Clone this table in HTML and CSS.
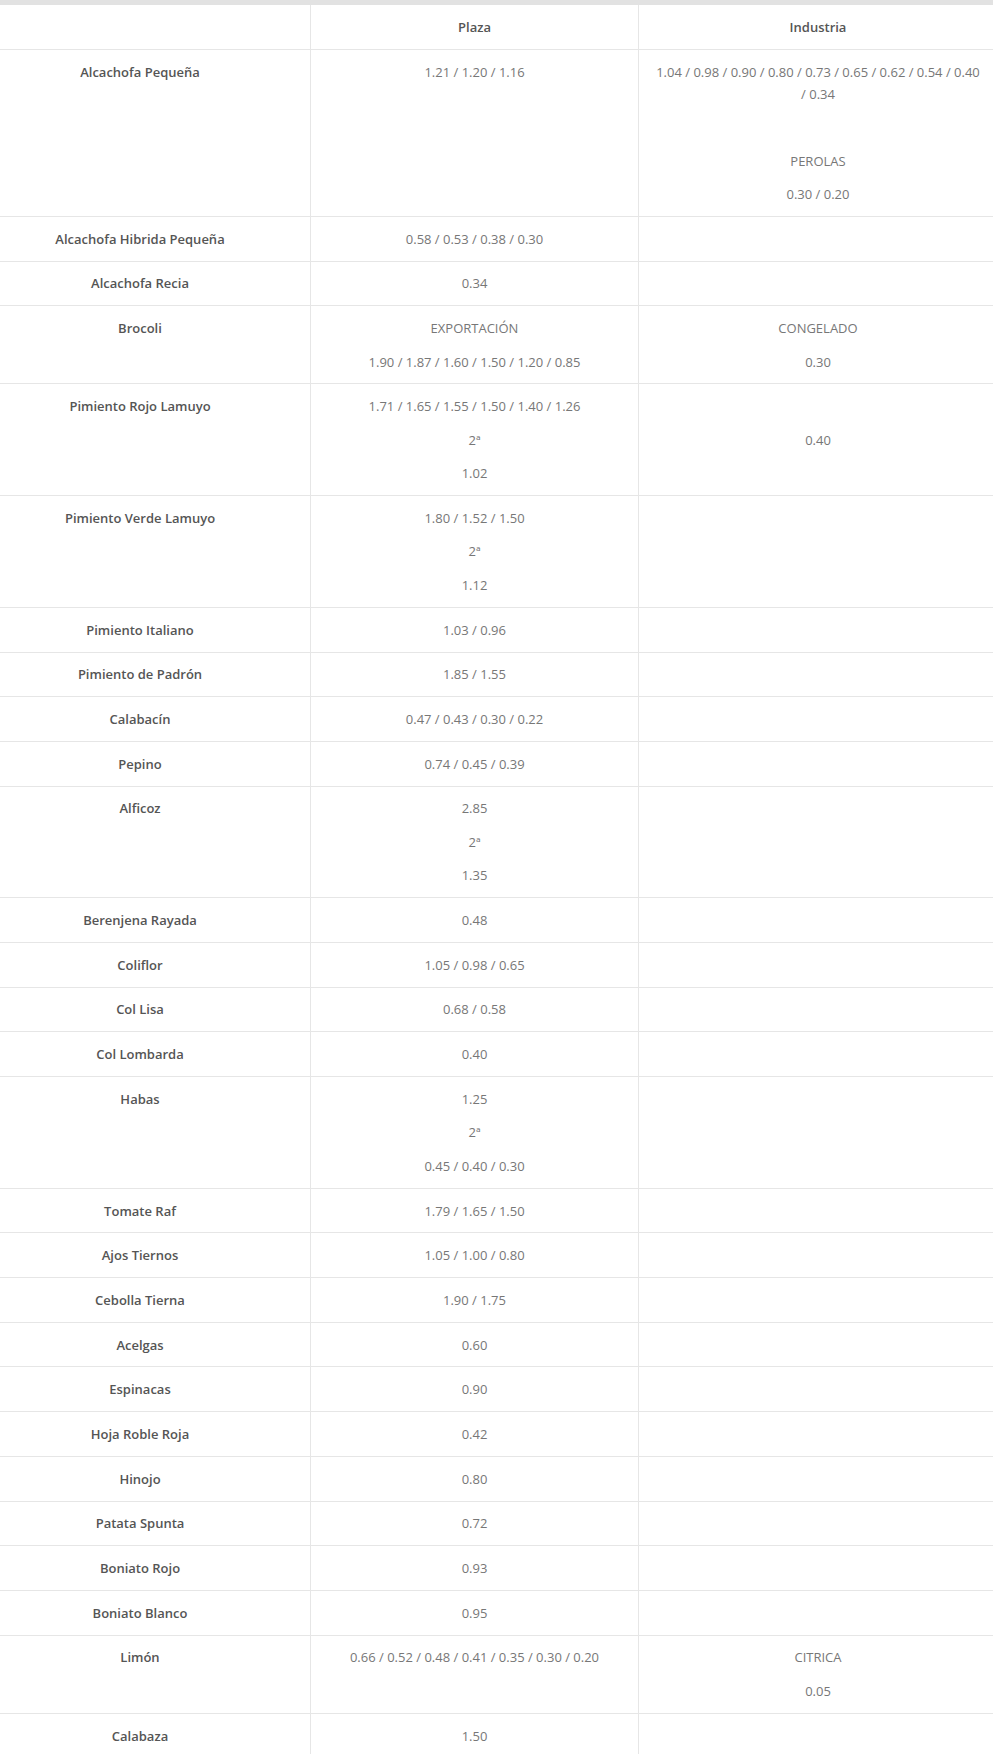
FILE: index.html
```html
<!DOCTYPE html>
<html lang="es">
<head>
<meta charset="utf-8">
<title>Precios</title>
<link rel="stylesheet" href="styles.css">
</head>
<body>
<div class="wrap">
<table class="prices">
<colgroup><col class="c1"><col class="c2"><col class="c3"></colgroup>
<thead>
<tr><th></th><th>Plaza</th><th>Industria</th></tr>
</thead>
<tbody>
<tr><td>Alcachofa Pequeña</td><td><p>1.21 / 1.20 / 1.16</p></td><td><p>1.04 / 0.98 / 0.90 / 0.80 / 0.73 / 0.65 / 0.62 / 0.54 / 0.40 /&nbsp;0.34</p><p>&nbsp;</p><p>PEROLAS</p><p>0.30 / 0.20</p></td></tr>
<tr><td>Alcachofa Hibrida Pequeña</td><td><p>0.58 / 0.53 / 0.38 / 0.30</p></td><td></td></tr>
<tr><td>Alcachofa Recia</td><td><p>0.34</p></td><td></td></tr>
<tr><td>Brocoli</td><td><p>EXPORTACIÓN</p><p>1.90 / 1.87 / 1.60 / 1.50 / 1.20 / 0.85</p></td><td><p>CONGELADO</p><p>0.30</p></td></tr>
<tr><td>Pimiento Rojo Lamuyo</td><td><p>1.71 / 1.65 / 1.55 / 1.50 / 1.40 / 1.26</p><p>2ª</p><p>1.02</p></td><td><p>&nbsp;</p><p>0.40</p></td></tr>
<tr><td>Pimiento Verde Lamuyo</td><td><p>1.80 / 1.52 / 1.50</p><p>2ª</p><p>1.12</p></td><td></td></tr>
<tr><td>Pimiento Italiano</td><td><p>1.03 / 0.96</p></td><td></td></tr>
<tr><td>Pimiento de Padrón</td><td><p>1.85 / 1.55</p></td><td></td></tr>
<tr><td>Calabacín</td><td><p>0.47 / 0.43 / 0.30 / 0.22</p></td><td></td></tr>
<tr><td>Pepino</td><td><p>0.74 / 0.45 / 0.39</p></td><td></td></tr>
<tr><td>Alficoz</td><td><p>2.85</p><p>2ª</p><p>1.35</p></td><td></td></tr>
<tr><td>Berenjena Rayada</td><td><p>0.48</p></td><td></td></tr>
<tr><td>Coliflor</td><td><p>1.05 / 0.98 / 0.65</p></td><td></td></tr>
<tr><td>Col Lisa</td><td><p>0.68 / 0.58</p></td><td></td></tr>
<tr><td>Col Lombarda</td><td><p>0.40</p></td><td></td></tr>
<tr><td>Habas</td><td><p>1.25</p><p>2ª</p><p>0.45 / 0.40 / 0.30</p></td><td></td></tr>
<tr><td>Tomate Raf</td><td><p>1.79 / 1.65 / 1.50</p></td><td></td></tr>
<tr><td>Ajos Tiernos</td><td><p>1.05 / 1.00 / 0.80</p></td><td></td></tr>
<tr><td>Cebolla Tierna</td><td><p>1.90 / 1.75</p></td><td></td></tr>
<tr><td>Acelgas</td><td><p>0.60</p></td><td></td></tr>
<tr><td>Espinacas</td><td><p>0.90</p></td><td></td></tr>
<tr><td>Hoja Roble Roja</td><td><p>0.42</p></td><td></td></tr>
<tr><td>Hinojo</td><td><p>0.80</p></td><td></td></tr>
<tr><td>Patata Spunta</td><td><p>0.72</p></td><td></td></tr>
<tr><td>Boniato Rojo</td><td><p>0.93</p></td><td></td></tr>
<tr><td>Boniato Blanco</td><td><p>0.95</p></td><td></td></tr>
<tr><td>Limón</td><td><p>0.66 / 0.52 / 0.48 / 0.41 / 0.35 / 0.30 / 0.20</p></td><td><p>CITRICA</p><p>0.05</p></td></tr>
<tr><td>Calabaza</td><td><p>1.50</p></td><td></td></tr>
</tbody>
</table>
</div>
</body>
</html>
```

FILE: styles.css
```css
html, body {
  margin: 0;
  padding: 0;
  background: #ffffff;
}

body {
  font-family: "Open Sans", "Liberation Sans", sans-serif;
  font-size: 13px;
  line-height: 22px;
  color: #777777;
}

.wrap {
  border-top: 5px solid #e2e2e2;
}

.prices {
  width: 993px;
  table-layout: fixed;
  border-collapse: separate;
  border-spacing: 0;
}

.c1 { width: 310px; }
.c2 { width: 328px; }
.c3 { width: 355px; }

.prices th,
.prices td {
  vertical-align: top;
  text-align: center;
  padding: 10.85px 8px;
  border-bottom: 1px solid #e6e6e6;
}

.prices th {
  font-weight: 600;
  color: #555555;
}

.prices th:nth-child(n+2),
.prices td:nth-child(n+2) {
  border-left: 1px solid #e6e6e6;
}

.prices th:first-child,
.prices td:first-child {
  padding-left: 0;
  padding-right: 30px;
}

.prices th:nth-child(3),
.prices td:nth-child(3) {
  padding-left: 16px;
  padding-right: 12px;
}

.prices td:first-child {
  font-weight: 600;
  color: #555555;
}

.prices p {
  margin: 0 0 11.5px;
}

.prices p:last-child {
  margin-bottom: 0;
}
```
